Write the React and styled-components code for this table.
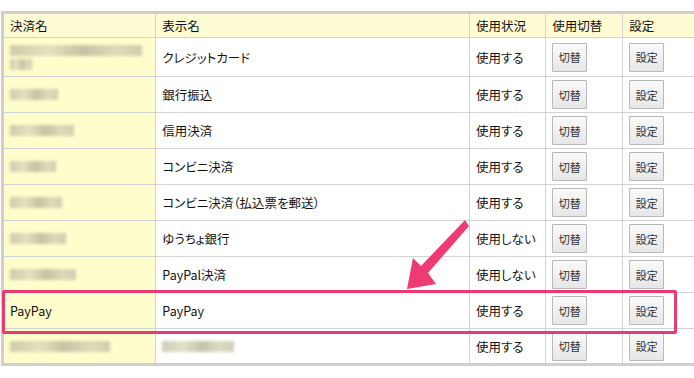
import React from "react";
import styled, { createGlobalStyle } from "styled-components";

const GlobalStyle = createGlobalStyle`
  html, body {
    margin: 0;
    padding: 0;
    background: #fff;
    overflow: hidden;
  }
  body {
    font-family: "Noto Sans CJK JP", "Noto Sans", sans-serif;
    font-feature-settings: "palt";
    color: #111;
  }
`;

const rows = [
  { code: [132, 22], name: "クレジットカード", status: "使用する", tall: true },
  { code: [48], name: "銀行振込", status: "使用する" },
  { code: [64], name: "信用決済", status: "使用する" },
  { code: [46], name: "コンビニ決済", status: "使用する" },
  { code: [52], name: "コンビニ決済（払込票を郵送）", status: "使用する" },
  { code: [56], name: "ゆうちょ銀行", status: "使用しない" },
  { code: [66], name: "PayPal決済", status: "使用しない" },
  { code: "PayPay", name: "PayPay", status: "使用する" },
  { code: [100], name: [72], status: "使用する" },
];

function Masked({ widths }) {
  return (
    <MaskStack>
      {widths.map((w, i) => (
        <MaskBar key={i} style={{ width: w }} />
      ))}
    </MaskStack>
  );
}

function PaymentTable() {
  return (
    <Table>
      <thead>
        <tr>
          <Th $w={153}>決済名</Th>
          <Th $w={313}>表示名</Th>
          <Th $w={76}>使用状況</Th>
          <Th $w={77}>使用切替</Th>
          <Th $w={71} $last>設定</Th>
        </tr>
      </thead>
      <tbody>
        {rows.map((r, i) => (
          <Row key={i} $tall={r.tall}>
            <CodeCell>
              {typeof r.code === "string" ? r.code : <Masked widths={r.code} />}
            </CodeCell>
            <Td>{typeof r.name === "string" ? r.name : <Masked widths={r.name} />}</Td>
            <Td>{r.status}</Td>
            <Td>
              <SmallButton>切替</SmallButton>
            </Td>
            <Td>
              <SmallButton>設定</SmallButton>
            </Td>
          </Row>
        ))}
      </tbody>
    </Table>
  );
}

function Arrow() {
  return (
    <ArrowSvg width="90" height="90" viewBox="0 0 90 90">
      <polygon
        points="64,2 68,8 27,55 35,66 6,71 12,40 20,48"
        fill="#ef3b73"
      />
    </ArrowSvg>
  );
}

export default function App() {
  return (
    <>
      <GlobalStyle />
      <Page>
        <TableWrap>
          <PaymentTable />
          <Highlight />
          <Arrow />
        </TableWrap>
      </Page>
    </>
  );
}

const Page = styled.div`
  padding: 11px 0 0 1px;
`;

const TableWrap = styled.div`
  position: relative;
  display: inline-block;
`;

const Table = styled.table`
  border-collapse: collapse;
  border-top: 3px solid #cfcfcf;
  border-left: 3px solid #cfcfcf;
  border-bottom: 3px solid #cfcfcf;
  font-size: 12.5px;
  table-layout: fixed;
  width: 693px;
`;

const Th = styled.th`
  width: ${(p) => p.$w}px;
  height: 25px;
  padding: 0 6px;
  background: #fffbd2;
  border: 1px solid #d2d2d2;
  border-top: none;
  border-right: ${(p) => (p.$last ? "none" : "1px solid #d2d2d2")};
  font-weight: normal;
  text-align: left;
  color: #111;
  box-sizing: border-box;
`;

const Row = styled.tr`
  height: ${(p) => (p.$tall ? 39 : 36)}px;
`;

const Td = styled.td`
  padding: 0 6px;
  border: 1px solid #d2d2d2;
  background: #fff;
  color: #111;
  white-space: nowrap;
  &:last-child {
    border-right: none;
  }
`;

const CodeCell = styled(Td)`
  background: #fffdcb;
`;

const MaskStack = styled.div`
  display: flex;
  flex-direction: column;
  gap: 3px;
  filter: blur(1.5px);
`;

const MaskBar = styled.span`
  display: block;
  height: 11px;
  background: linear-gradient(90deg, #c2bfa3, #dcd9bb 30%, #b6b398 55%, #d5d2b5 80%, #c4c1a6);
  opacity: 0.8;
`;

const SmallButton = styled.button`
  font-family: inherit;
  font-feature-settings: inherit;
  font-size: 11px;
  color: #333;
  width: 35px;
  height: 29px;
  padding: 0;
  border: 1px solid #b8b8b8;
  border-radius: 1px;
  background: linear-gradient(#fafafa, #e6e6e6);
  display: block;
`;

const Highlight = styled.div`
  position: absolute;
  left: 1px;
  top: 279px;
  width: 669px;
  height: 38px;
  border: 3px solid #ea3a72;
  border-radius: 2px;
  pointer-events: none;
`;

const ArrowSvg = styled.svg`
  position: absolute;
  left: 400px;
  top: 207px;
  overflow: visible;
  pointer-events: none;
`;
